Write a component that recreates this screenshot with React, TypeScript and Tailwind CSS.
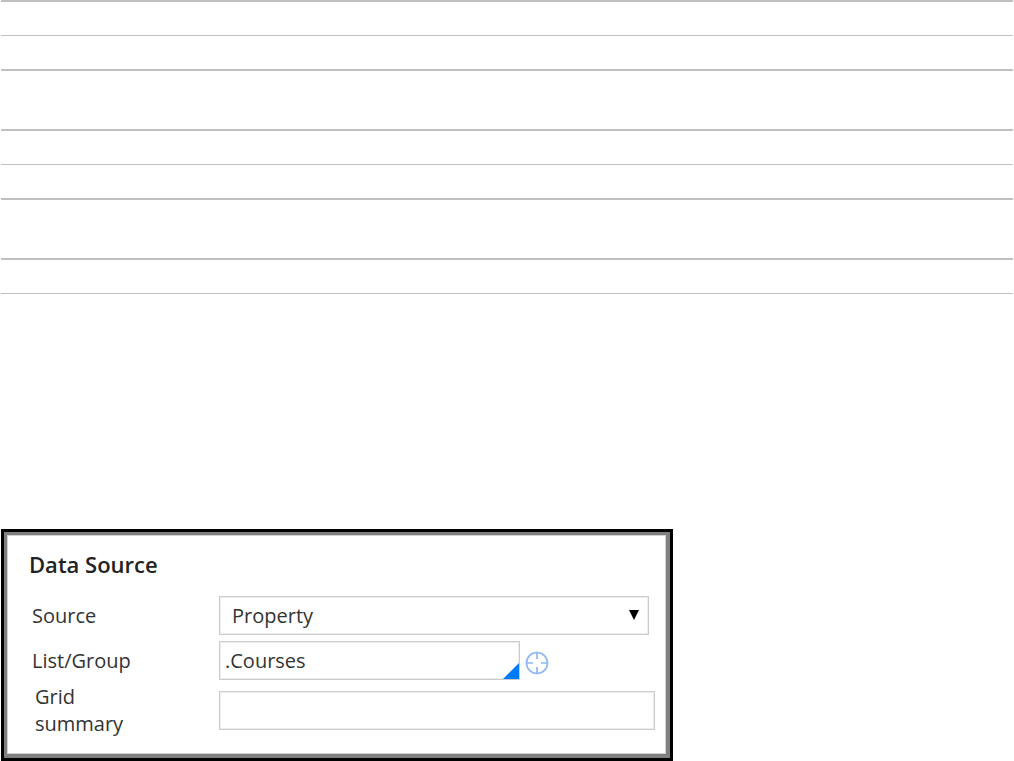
import { useState } from "react";

const groups = [1, 2];

const fieldBox = "h-[39px] min-w-0 border border-[#cccccc] bg-white text-xl text-[#333] shadow-[inset_0_0_0_1px_#ececec] outline-none";
const labelText = "w-[187px] shrink-0 text-xl leading-[27px] text-[#333]";

const RuledRows = () => (
  <div className="mx-px">
    {groups.map((g) => (
      <div key={g} className="mb-[58px] border-y-2 border-[#c0c0c0]">
        <div className="h-[34px] border-b border-[#c0c0c0]" />
        <div className="h-[33px]" />
      </div>
    ))}
    <div className="h-9 border-t-2 border-b border-[#c0c0c0]" />
  </div>
);

const TargetIcon = () => (
  <svg width="24" height="24" viewBox="0 0 24 24" fill="none" stroke="#8fb8f2" strokeWidth="1.7">
    <circle cx="12" cy="12" r="10.5" />
    <path d="M12 1.5v6.500M12 16v6.500M1.500 12H8M16 12h6.500" />
  </svg>
);

const DataSourcePanel = () => {
  const [source, setSource] = useState("Property");
  const [list, setList] = useState(".Courses");
  const [summary, setSummary] = useState("");

  return (
    <section className="ml-px w-full max-w-[672px] border-[3px] border-black">
      <div className="border-3 border-r-4 border-b-4 border-[#808080] bg-white">
        <div className="border border-[#d0d0d0] pt-3 pr-[10px] pb-4 pl-[21px]">
          <h2 className="text-[22px] leading-8 font-semibold text-[#222]">Data Source</h2>

          <div className="mt-4 flex items-center pr-1.5 pl-[3px]">
            <label htmlFor="source" className={labelText}>Source</label>
            <div className="relative flex min-w-0 flex-1">
              <select
                id="source"
                value={source}
                onChange={(e) => setSource(e.target.value)}
                className={`${fieldBox} flex-1 appearance-none pl-3`}
              >
                <option>Property</option>
              </select>
              <svg className="pointer-events-none absolute top-[14px] right-[10px]" width="10" height="10" viewBox="0 0 10 10">
                <path d="M0 0h10L5 10z" fill="#000" />
              </svg>
            </div>
          </div>

          <div className="mt-1.5 flex items-center pl-[3px]">
            <label htmlFor="list" className={labelText}>List/Group</label>
            <div className="relative flex w-[301px] min-w-0">
              <input
                id="list"
                value={list}
                onChange={(e) => setList(e.target.value)}
                className={`${fieldBox} flex-1 pl-[5px]`}
              />
              <svg className="pointer-events-none absolute right-px bottom-px" width="16" height="16" viewBox="0 0 16 16">
                <path d="M16 0v16H0z" fill="#007bff" />
              </svg>
            </div>
            <button type="button" aria-label="Locate property" className="ml-[5px] shrink-0 cursor-pointer pt-1">
              <TargetIcon />
            </button>
          </div>

          <div className="mt-[3px] flex items-center pl-1.5">
            <div className="w-[184px] shrink-0">
              <label htmlFor="summary" className="block w-[100px] text-xl leading-[27px] text-[#333]">Grid summary</label>
            </div>
            <input
              id="summary"
              value={summary}
              onChange={(e) => setSummary(e.target.value)}
              className={`${fieldBox} flex-1 pl-1`}
            />
          </div>
        </div>
      </div>
    </section>
  );
};

const App = () => (
  <main className="bg-white font-['Open_Sans',sans-serif]">
    <RuledRows />
    <div className="pt-[235px]">
      <DataSourcePanel />
    </div>
  </main>
);

export default App;
